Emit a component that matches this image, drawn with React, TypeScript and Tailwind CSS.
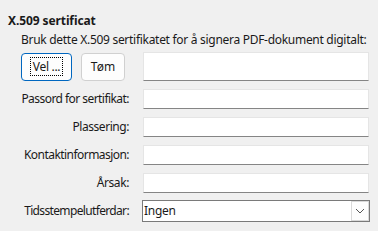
import React from "react";

const font = { fontFamily: '"Noto Sans", "Segoe UI", sans-serif' };

function Field({ label, track }: { label: string; track: string }) {
  return (
    <div className="flex items-center h-[20px]">
      <div className={`w-[121px] text-right text-[12px] text-[#1a1a1a] whitespace-nowrap ${track}`}>{label}</div>
      <div className="ml-[14px] w-[226px] h-[20px] bg-white border border-[#e5e5e5] border-b-[#858585]" />
    </div>
  );
}

export default function App() {
  return (
    <div className="w-[378px] h-[231px] bg-[#f0f0f0] text-[#1a1a1a] overflow-hidden" style={font}>
      <div className="pl-[8px] pt-[13px] text-[12px] leading-[16px] font-bold tracking-[-0.1px]">X.509 sertificat</div>
      <div className="pl-[21px] pt-[3px] text-[12px] leading-[16px] tracking-[-0.29px] whitespace-nowrap">
        Bruk dette X.509 sertifikatet for å signera PDF-dokument digitalt:
      </div>
      <div className="flex flex-col gap-[8px] pl-[8px] pt-[4px]">
        <div className="flex items-center h-[29px]">
          <div className="w-[121px] flex items-center pl-[13px] gap-[9px]">
            <button className="w-[51px] h-[28px] rounded-[4px] border border-[#0067c0] bg-[#fdfdfd] flex items-center justify-center text-[12px] tracking-[-0.3px]">
              <span className="border border-dotted border-black px-[2px] leading-[17px]">Vel ...</span>
            </button>
            <button className="w-[44px] h-[28px] rounded-[4px] border border-[#d0d0d0] bg-[#fdfdfd] flex items-center justify-center text-[12px]">
              Tøm
            </button>
          </div>
          <div className="ml-[14px] w-[226px] h-[29px] bg-white border border-[#e5e5e5] border-b-[#858585]" />
        </div>
        <Field label="Passord for sertifikat:" track="tracking-[-0.55px]" />
        <Field label="Plassering:" track="tracking-[-0.45px]" />
        <Field label="Kontaktinformasjon:" track="tracking-[-0.55px]" />
        <Field label="Årsak:" track="tracking-[-0.4px]" />
        <div className="flex items-center h-[22px] -mt-[1px]">
          <div className="w-[121px] text-right text-[12px] whitespace-nowrap tracking-[-0.65px]">Tidsstempelutferdar:</div>
          <div className="ml-[13px] w-[228px] h-[22px] bg-white border border-[#7a7a7a] flex items-center">
            <span className="pl-[1px] text-[12px] flex-1 tracking-[-0.3px]">Ingen</span>
            <div className="w-[18px] h-[20px] border border-[#d9d9d9] bg-[#fdfdfd] flex items-center justify-center">
              <svg width="10" height="6" viewBox="0 0 10 6">
                <path d="M1 1 L5 5 L9 1" fill="none" stroke="#555" strokeWidth="1" />
              </svg>
            </div>
          </div>
        </div>
      </div>
    </div>
  );
}
